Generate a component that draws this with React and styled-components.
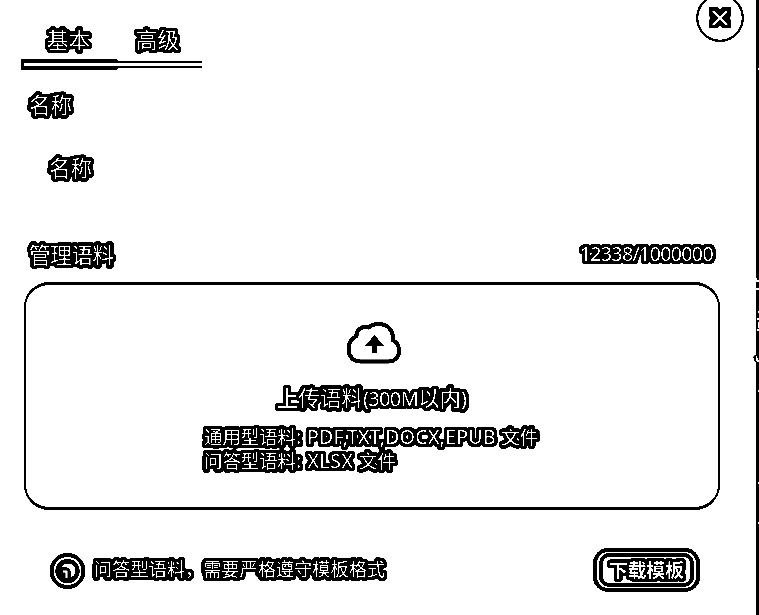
import React from "react";
import styled, { createGlobalStyle } from "styled-components";

const GlobalStyle = createGlobalStyle`
  * { box-sizing: border-box; }
  body { margin: 0; background: #fff; overflow: hidden; }
`;

// Solid halo: the glyph shape repeated on a rounded block of offsets.
const halo = (radius) => {
  const parts = [];
  for (let x = -3; x <= 3; x += 1) {
    for (let y = -3; y <= 3; y += 1) {
      if ((x || y) && x * x + y * y <= radius * radius) {
        parts.push(`${x}px ${y}px 0 #000`);
      }
    }
  }
  return parts.join(",");
};

const Page = styled.div`
  display: flex;
  width: 759px;
  height: 615px;
  overflow: hidden;
  background: #fff;
  font-family: "Noto Sans", "Noto Sans CJK SC", sans-serif;
  filter: grayscale(1) contrast(30);
`;

const Panel = styled.main`
  flex: 1;
  display: flex;
  flex-direction: column;
  height: 615px;
`;

const Edge = styled.svg`
  flex: none;
  width: 7px;
  height: 615px;
`;

const Label = styled.span`
  display: block;
  white-space: pre;
  color: #c0c0c0;
  font-size: ${(p) => p.$size || 21.5}px;
  line-height: ${(p) => p.$line || 28}px;
  font-weight: ${(p) => p.$weight || 400};
  letter-spacing: ${(p) => p.$track || 0}px;
  text-shadow: ${halo(3.7)};
`;

const Latin = styled.span`
  font-size: ${(p) => p.$size}px;
  line-height: 1;
  letter-spacing: ${(p) => p.$track || 0}px;
`;

const Header = styled.header`
  display: flex;
  justify-content: space-between;
  height: 91px;
  padding-left: 21px;
  padding-right: 8px;
`;

const Tabs = styled.nav`
  width: 181px;
  padding-top: 26px;
`;

const TabRow = styled.div`
  display: flex;
  gap: 46px;
  height: 33px;
  padding-left: 26px;
`;

const TabTrack = styled.div`
  display: flex;
  align-items: center;
  height: 11px;
`;

const ActiveTrack = styled.div`
  width: 97px;
  height: 11px;
  border: solid #000;
  border-width: 4px 0 4px 3px;
  border-radius: 2px;
`;

const RestTrack = styled.div`
  flex: 1;
  height: 7px;
  border: solid #000;
  border-width: 2px 0;
`;

const CloseIcon = styled.svg`
  width: 48px;
  height: 48px;
`;

const NameField = styled.div`
  height: 150px;
  padding-left: 29px;
`;

const NameValue = styled.div`
  padding: 35px 0 0 20px;
`;

const CorpusHead = styled.div`
  display: flex;
  justify-content: space-between;
  height: 41px;
  padding: 0 39px 0 29px;
`;

const UploadBox = styled.section`
  display: flex;
  flex-direction: column;
  align-items: center;
  width: 696px;
  height: 228px;
  margin-left: 24px;
  padding-top: 35px;
  border: 2.5px solid #000;
  border-top-width: 3px;
  border-bottom-width: 3px;
  border-radius: 25px;
`;

const CloudIcon = styled.svg`
  width: 56px;
  height: 46px;
  margin-left: 4px;
`;

const UploadTitle = styled.div`
  margin-top: 18px;
`;

const Hints = styled.div`
  width: 338px;
  margin-top: 13px;
  padding-left: 1px;
`;

const Footer = styled.footer`
  display: flex;
  align-items: center;
  height: 44px;
  margin-top: 38px;
  padding: 0 52px 0 49px;
`;

const FooterText = styled.div`
  padding-bottom: 2px;
`;

const InfoIcon = styled.svg`
  width: 37px;
  height: 37px;
  margin-right: 8px;
`;

const ButtonOuter = styled.button`
  width: 107px;
  height: 44px;
  margin-left: auto;
  padding: 1px 2px;
  border: 4px solid #000;
  border-radius: 15px;
  background: #fff;
  font-family: inherit;
`;

const ButtonInner = styled.span`
  display: flex;
  align-items: center;
  justify-content: center;
  height: 34px;
  border: 4px solid #000;
  border-radius: 10px;
`;

export default function App() {
  return (
    <>
      <GlobalStyle />
      <Page>
        <Panel>
          <Header>
            <Tabs>
              <TabRow>
                <Label>基本</Label>
                <Label>高级</Label>
              </TabRow>
              <TabTrack>
                <ActiveTrack />
                <RestTrack />
              </TabTrack>
            </Tabs>
            <CloseIcon viewBox="696 0 48 48">
              <circle cx="720" cy="18" r="22.8" fill="none" stroke="#000" strokeWidth="2.2" />
              <path d="M709 7H717L720 9L723 7H731V15L730 18L731 21V28H723L720 26L717 28H709V21L710 18L709 15Z" fill="#000" />
              <path d="M713 11L727 25M727 11L713 25" stroke="#fff" strokeWidth="2.4" />
            </CloseIcon>
          </Header>
          <NameField>
            <Label>名称</Label>
            <NameValue>
              <Label>名称</Label>
            </NameValue>
          </NameField>
          <CorpusHead>
            <Label $track={-0.3}>管理语料</Label>
            <Label $size={19.6} $line={26} $track={-0.65}>12338/1000000</Label>
          </CorpusHead>
          <UploadBox>
            <CloudIcon viewBox="346 319 56 46">
              <path
                d="M360 360.500H389C395 360.500 399 356 399 350C399 345 397 341 393 339.500C394 329 387 323 379 323C374 323 371 324 368.500 326.500C361 324 356 330 356.500 335C350 338 348.500 343 348.500 348C348.500 355 353 360.500 360 360.500Z"
                fill="none"
                stroke="#000"
                strokeWidth="4"
                strokeLinejoin="round"
              />
              <path d="M374.500 334L384 345H377V352H372V345H365Z" fill="#000" />
            </CloudIcon>
            <UploadTitle>
              <Label>上传语料<Latin $size={20} $track={-0.7}>(300M</Latin>以内<Latin $size={20}>)</Latin></Label>
            </UploadTitle>
            <Hints>
              <Label $size={18.4} $line={24}>通用型语料<Latin $size={19.4} $track={0.35}>: PDF,TXT,DOCX,EPUB </Latin>文件</Label>
              <Label $size={18.4} $line={24}>问答型语料<Latin $size={19.4} $track={0.6}>: XLSX </Latin>文件</Label>
            </Hints>
          </UploadBox>
          <Footer>
            <InfoIcon viewBox="49 551 37 37">
              <circle cx="67.5" cy="570" r="16" fill="none" stroke="#000" strokeWidth="4" />
              <circle cx="67.5" cy="570" r="12.2" fill="#000" />
              <path d="M62 565.500C66 561.500 74 562 75 569C75 573 73 575 71 576C73 571 70 564 62 565.500Z" fill="#fff" stroke="#fff" strokeWidth="1" />
              <path d="M63 570.500H66.500V577" fill="none" stroke="#fff" strokeWidth="2" />
            </InfoIcon>
            <FooterText>
              <Label $size={18.2}>问答型语料，需要严格遵守模板格式</Label>
            </FooterText>
            <ButtonOuter>
              <ButtonInner>
                <Label $size={18.7} $weight={700}>下载模板</Label>
              </ButtonInner>
            </ButtonOuter>
          </Footer>
        </Panel>
        <Edge viewBox="752 0 7 615">
          <path d="M756 0H759V615H756ZM753 357L755 355H757V362H755Z" fill="#000" />
          <path
            d="M758 68h1v2h-1zM755 278h2v2h2v2h-4zM756 288h3v2h-3zM758 311h1v2h-1zM757 318h2v2h-2zM758 322h1v6h-1zM757 329h2v2h-2zM756 356h1l1 4h1v2h-2l-1-2zM758 390h1v2h-1zM758 482h1v2h-1zM758 522h1v2h-1z"
            fill="#fff"
          />
        </Edge>
      </Page>
    </>
  );
}
